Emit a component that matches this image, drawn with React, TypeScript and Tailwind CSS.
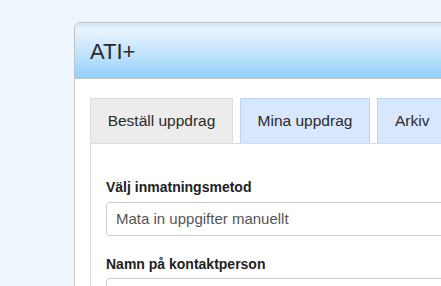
export default function App() {
  return (
    <div className="h-[286px] w-[441px] overflow-hidden bg-[#eef7fd] pl-[74px] pt-[22px] font-['Liberation_Sans',Arial,sans-serif]">
      <div className="w-[420px] h-[300px] rounded-tl-[6px] border border-[#c4c4c4] bg-white overflow-hidden">
        <div className="h-[56px] border-b border-[#c8c8c8] bg-[linear-gradient(to_bottom,#cfe7fa_0%,#e8f4fd_12%,#c6e6fc_50%,#93d1fa_100%)] pl-[15px] flex items-center">
          <h1 className="text-[22px] text-[#2a2a2a] leading-none pt-[2px]">ATI+</h1>
        </div>
        <div className="pl-[15px] pt-[19px]">
          <div className="flex gap-[7px]">
            <div className="h-[45px] w-[143px] flex items-center justify-center border border-b-0 border-[#dcdcdc] bg-[#ececec] text-[15.5px] text-[#2a2a2a]">
              Beställ uppdrag
            </div>
            <div className="h-[45px] w-[130px] flex items-center justify-center border border-b-0 border-[#bdd3f7] bg-[#d9e7fe] text-[15.5px] text-[#2a2a2a]">
              Mina uppdrag
            </div>
            <div className="h-[45px] w-[90px] flex items-center justify-start pl-[17px] border border-b-0 border-[#bdd3f7] bg-[#d9e7fe] text-[15.5px] text-[#2a2a2a]">
              Arkiv
            </div>
          </div>
          <div className="border-l border-t border-[#dcdcdc] pl-[15px] pt-[33px] h-[200px]">
            <label className="block text-[14px] leading-[20px] font-bold text-[#222]">Välj inmatningsmetod</label>
            <div className="mt-[5px] h-[34px] w-[360px] rounded-[4px] border border-[#cccccc] flex items-center pl-[9px] text-[15px] text-[#555]">
              Mata in uppgifter manuellt
            </div>
            <label className="block mt-[18px] text-[14px] leading-[20px] font-bold text-[#222]">Namn på kontaktperson</label>
            <div className="mt-[4px] h-[34px] w-[360px] rounded-[4px] border border-[#cccccc]"></div>
          </div>
        </div>
      </div>
    </div>
  );
}
